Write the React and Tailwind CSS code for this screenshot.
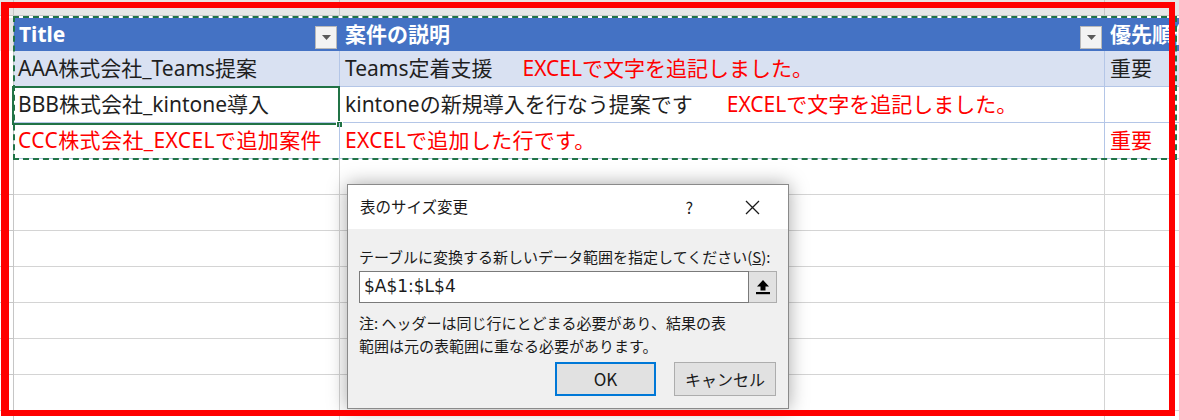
const ROWS = [
  {
    bg: 'bg-[#d9e1f2]',
    a: <span>AAA株式会社_Teams提案</span>,
    b: (
      <>
        <span>Teams定着支援</span>
        <span className="ml-[30px] text-[#ff0000]">EXCELで文字を追記しました。</span>
      </>
    ),
    c: <span>重要</span>,
  },
  {
    bg: 'bg-white',
    selected: true,
    a: <span>BBB株式会社_kintone導入</span>,
    b: (
      <>
        <span>kintoneの新規導入を行なう提案です</span>
        <span className="ml-[34px] text-[#ff0000]">EXCELで文字を追記しました。</span>
      </>
    ),
    c: null,
  },
  {
    bg: 'bg-white',
    a: <span className="text-[#ff0000] tracking-[0.4px]">CCC株式会社_EXCELで追加案件</span>,
    b: <span className="text-[#ff0000] tracking-[0.3px]">EXCELで追加した行です。</span>,
    c: <span className="text-[#ff0000]">重要</span>,
  },
];

function FilterButton() {
  return (
    <div className="w-[22px] h-[23px] bg-[#f3f3f3] border border-[#b9b9b9] flex items-center justify-center shrink-0">
      <svg width="9" height="5" viewBox="0 0 9 5">
        <path d="M0 0 H9 L4.5 5 Z" fill="#5a5a5a" />
      </svg>
    </div>
  );
}

function HeaderCell({ width, label }) {
  return (
    <div className={`${width} h-full bg-[#4472c4] flex items-center pl-[5px] pr-[3px] overflow-hidden`}>
      <span className="font-bold text-white whitespace-nowrap">{label}</span>
      <div className="ml-auto self-end mb-[2px]">
        <FilterButton />
      </div>
    </div>
  );
}

function UploadIcon() {
  return (
    <svg width="14" height="16" viewBox="0 0 14 16">
      <path d="M7 1 L13 7.5 H9.5 V11.5 H4.5 V7.5 H1 Z" fill="#000" />
      <rect x="0" y="13" width="14" height="2.2" fill="#000" />
    </svg>
  );
}

export default function App() {
  return (
    <div className="relative w-[1179px] h-[420px] overflow-hidden bg-white font-['Noto_Sans','Noto_Sans_CJK_JP',sans-serif] text-[21px] text-[#1f1f1f]">
      {/* column header band */}
      <div className="flex h-[16px] bg-[#e6e6e6] border-b border-[#c6c6c6]">
        <div className="w-[14px] border-r border-[#c6c6c6]" />
        <div className="w-[326px] border-r border-[#c6c6c6]" />
        <div className="w-[765px] border-r border-[#c6c6c6]" />
        <div className="flex-1" />
      </div>

      {/* table header */}
      <div className="flex h-[35px] pt-[2px]">
        <div className="w-[14px] bg-[#e6e6e6] border-r border-[#c6c6c6]" />
        <HeaderCell width="w-[326px]" label="Title" />
        <HeaderCell width="w-[765px]" label="案件の説明" />
        <div className="flex-1 h-full bg-[#4472c4] flex items-center pl-[5px] overflow-hidden">
          <span className="font-bold text-white whitespace-nowrap">優先順位</span>
        </div>
      </div>

      {/* table rows */}
      {ROWS.map((row, i) => (
        <div key={i} className={`flex h-[36px] ${row.bg}`}>
          <div className="w-[14px] bg-white border-r border-[#c6c6c6]" />
          <div className="relative w-[326px] flex items-center pl-[4px] border-b border-r border-[#b4c6e7] whitespace-nowrap overflow-visible">
            {row.a}
            {row.selected && (
              <div className="absolute -left-[2px] -top-[1px] -right-[1px] -bottom-[3px] border-2 border-[#217346]">
                <div className="absolute -right-[5px] -bottom-[5px] w-[7px] h-[7px] bg-[#217346] border border-white" />
              </div>
            )}
          </div>
          <div className="w-[765px] flex items-center pl-[5px] border-b border-r border-[#b4c6e7] whitespace-nowrap overflow-hidden">
            {row.b}
          </div>
          <div className="flex-1 flex items-center pl-[5px] border-b border-[#b4c6e7] whitespace-nowrap overflow-hidden">
            {row.c}
          </div>
        </div>
      ))}

      {/* empty sheet rows */}
      {Array.from({ length: 8 }).map((_, i) => (
        <div key={i} className="flex h-[36px]">
          <div className="w-[14px] border-r border-b border-[#c6c6c6]" />
          <div className="w-[326px] border-b border-r border-[#d4d4d4]" />
          <div className="w-[765px] border-b border-r border-[#d4d4d4]" />
          <div className="flex-1 border-b border-[#d4d4d4]" />
        </div>
      ))}

      {/* copy marquee around the table */}
      <div className="absolute left-[13px] top-[16px] w-[1164px] h-[144px] border-2 border-dashed border-[#217346] pointer-events-none" />

      {/* resize dialog */}
      <div className="absolute left-[347px] top-[184px] w-[442px] h-[225px] bg-[#f0f0f0] border border-[#8a8a8a] shadow-[0_0_18px_rgba(0,0,0,0.35)] flex flex-col text-[15px] text-[#1a1a1a] font-['Noto_Sans_CJK_JP',sans-serif]">
        <div className="h-[44px] shrink-0 bg-white flex items-center pl-[12px]">
          <span className="text-[15.5px]">表のサイズ変更</span>
          <span className="ml-auto mr-[52px] text-[16px]">?</span>
          <svg width="15" height="15" viewBox="0 0 15 15" className="mr-[28px]">
            <path d="M1 1 L14 14 M14 1 L1 14" stroke="#1a1a1a" strokeWidth="1.3" />
          </svg>
        </div>
        <div className="flex flex-col px-[11px] pt-[18px]">
          <div className="leading-[20px] whitespace-nowrap">
            テーブルに変換する新しいデータ範囲を指定してください(<span className="underline">S</span>):
          </div>
          <div className="flex mt-[4px] h-[32px]">
            <div className="flex-1 bg-white border border-[#7a7a7a] flex items-center pl-[4px] text-[17px] font-['DejaVu_Sans',sans-serif]">
              $A$1:$L$4
            </div>
            <div className="w-[28px] bg-[#e1e1e1] border border-l-0 border-[#adadad] flex items-center justify-center">
              <UploadIcon />
            </div>
          </div>
          <div className="mt-[8px] leading-[23px]">
            注: ヘッダーは同じ行にとどまる必要があり、結果の表
            <br />
            範囲は元の表範囲に重なる必要があります。
          </div>
          <div className="flex justify-end gap-[18px] mt-[5px] pr-[1px]">
            <button className="w-[101px] h-[34px] bg-[#e1e1e1] border-2 border-[#0078d7] text-[17px]">OK</button>
            <button className="w-[102px] h-[34px] bg-[#e1e1e1] border border-[#adadad] text-[16px]">キャンセル</button>
          </div>
        </div>
      </div>

      {/* red annotation frame */}
      <div className="absolute left-[1px] top-[2px] w-[1174px] h-[414px] border-[6px] border-l-[8px] border-[#ff0000] pointer-events-none" />
    </div>
  );
}
